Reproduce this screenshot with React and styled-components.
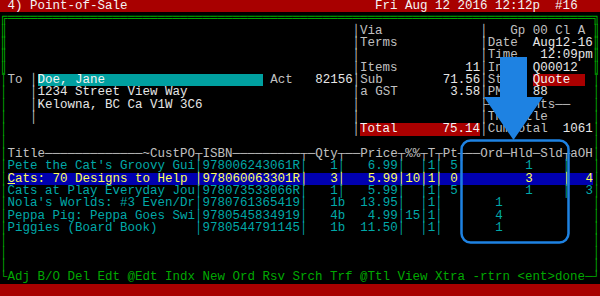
import React from 'react';
import styled, { createGlobalStyle } from 'styled-components';

const COLS = 80;

const TONES = {
  plain: { fg: '#c0c0c0', bg: 'transparent' },
  lab: { fg: '#c0c0c0', bg: 'transparent' },
  val: { fg: '#e6e6e6', bg: 'transparent' },
  grn: { fg: '#00a800', bg: 'transparent' },
  teal: { fg: '#00a8a8', bg: 'transparent' },
  bar: { fg: '#f4f4f4', bg: '#a80000' },
  red: { fg: '#f4f4f4', bg: '#aa0000' },
  name: { fg: '#f4f4f4', bg: '#00a0a0' },
  sel: { fg: '#ffff55', bg: '#0000b0' },
  cur: { fg: '#ffff55', bg: '#0000b0', underline: true },
};

const ITEMS = [
  { title: "Pete the Cat's Groovy Gui", isbn: '978006243061R', qty: '1', price: '6.99', disc: '', t: '1', pt: '5', ord: '', hld: '1', aoh: '' },
  { title: 'Cats: 70 Designs to Help', isbn: '978060063301R', qty: '3', price: '5.99', disc: '10', t: '1', pt: '0', ord: '', hld: '3', aoh: '4', selected: true },
  { title: 'Cats at Play Everyday Jou', isbn: '978073533066R', qty: '1', price: '5.99', disc: '', t: '1', pt: '5', ord: '', hld: '1', aoh: '3' },
  { title: "Nola's Worlds: #3 Even/Dr", isbn: '9780761365419', qty: '1b', price: '13.95', disc: '', t: '1', pt: '', ord: '1', hld: '', aoh: '' },
  { title: 'Peppa Pig: Peppa Goes Swi', isbn: '9780545834919', qty: '4b', price: '4.99', disc: '15', t: '1', pt: '', ord: '4', hld: '', aoh: '' },
  { title: 'Piggies (Board Book)', isbn: '9780544791145', qty: '1b', price: '11.50', disc: '', t: '1', pt: '', ord: '1', hld: '', aoh: '' },
];

const COMMANDS = 'Adj B/O Del Edt @Edt Indx New Ord Rsv Srch Trf @Ttl View Xtra -rtrn <ent>done';

// right-aligned text ending at column `end`
const ra = (end, text, tone) => [end - text.length + 1, text, tone];

const build = (parts, fill = 'plain') => {
  const out = [];
  let col = 0;
  [...parts]
    .filter((p) => p[1])
    .sort((a, b) => a[0] - b[0])
    .forEach(([c, text, tone]) => {
      if (c > col) out.push([' '.repeat(c - col), fill]);
      out.push([text, tone]);
      col = c + text.length;
    });
  if (col < COLS) out.push([' '.repeat(COLS - col), fill]);
  return out;
};

const sides = (row) => {
  const ch = row <= 5 ? '║' : '│';
  return [
    [0, ch, 'grn'],
    [79, ch, 'grn'],
  ];
};

const itemRow = (it) => {
  const tone = it.selected ? 'sel' : 'teal';
  const parts = [
    [26, '│', tone],
    [27, it.isbn, tone],
    [40, '│', tone],
    ra(52, it.price, tone),
    [53, '│', tone],
    [56, '│', tone],
    [57, it.t, tone],
    [58, '│', tone],
    [60, it.pt, tone],
  ];
  if (it.selected) {
    parts.push([1, it.title[0], 'cur'], [2, it.title.slice(1), tone]);
  } else {
    parts.push([1, it.title, tone]);
  }
  if (it.qty.endsWith('b')) parts.push([44, it.qty, tone]);
  else parts.push(ra(44, it.qty, tone), [45, '│', tone]);
  if (it.disc) parts.push(ra(55, it.disc, tone));
  if (it.ord) parts.push(ra(66, it.ord, tone));
  if (it.hld) parts.push(ra(70, it.hld, tone), [75, '│', tone]);
  if (it.aoh) parts.push(ra(78, it.aoh, tone));
  return parts;
};

const makeRows = () => {
  const rows = [];
  rows[0] = build(
    [
      [1, '4) Point-of-Sale', 'bar'],
      [50, 'Fri Aug 12 2016 12:12p  #16', 'bar'],
    ],
    'bar'
  );
  rows[1] = build([[0, '╔' + '═'.repeat(78) + '╗', 'grn']]);
  rows[2] = build([...sides(2), [47, '│', 'lab'], [48, 'Via', 'lab'], [64, '│', 'lab'], [68, 'Gp 00 Cl A', 'lab']]);
  rows[3] = build([...sides(3), [47, '│', 'lab'], [48, 'Terms', 'lab'], [64, '│', 'lab'], [65, 'Date', 'lab'], [71, 'Aug12-16', 'val']]);
  rows[4] = build([...sides(4), [47, '│', 'lab'], [64, '│', 'lab'], [65, 'Time', 'lab'], [72, '12:09pm', 'val']]);
  rows[5] = build([...sides(5), [47, '│', 'lab'], [48, 'Items', 'lab'], ra(63, '11', 'val'), [64, '│', 'lab'], [65, 'Inv', 'lab'], [71, 'Q00012', 'val']]);
  rows[6] = build([
    ...sides(6),
    [1, 'To', 'lab'],
    [4, '│', 'lab'],
    [5, 'Doe, Jane'.padEnd(30), 'name'],
    [36, 'Act', 'lab'],
    ra(46, '82156', 'val'),
    [47, '│', 'lab'],
    [48, 'Sub', 'lab'],
    ra(63, '71.56', 'val'),
    [64, '│', 'lab'],
    [65, 'Stat', 'lab'],
    [71, 'Quote  ', 'red'],
  ]);
  rows[7] = build([
    ...sides(7),
    [4, '│', 'lab'],
    [5, '1234 Street View Way', 'val'],
    [47, '│', 'lab'],
    [48, 'a GST', 'lab'],
    ra(63, '3.58', 'val'),
    [64, '│', 'lab'],
    [65, 'PM', 'lab'],
    [71, '88', 'val'],
  ]);
  rows[8] = build([
    ...sides(8),
    [4, '│', 'lab'],
    [5, 'Kelowna, BC Ca V1W 3C6', 'val'],
    [47, '│', 'lab'],
    [64, '├───Points──', 'lab'],
  ]);
  rows[9] = build([...sides(9), [4, '│', 'lab'], [47, '│', 'lab'], [64, '│', 'lab'], [65, 'TheTitle', 'lab']]);
  rows[10] = build([
    ...sides(10),
    [47, '│', 'lab'],
    [48, 'Total' + ' '.repeat(6) + '75.14', 'red'],
    [64, '│', 'lab'],
    [65, 'CumTotal', 'lab'],
    [75, '1061', 'val'],
  ]);
  rows[11] = build(sides(11));
  rows[12] = build([
    ...sides(12),
    [1, 'Title', 'lab'],
    [6, '─'.repeat(13), 'lab'],
    [19, '~CustPO', 'lab'],
    [26, '┬', 'lab'],
    [27, 'ISBN', 'lab'],
    [31, '─'.repeat(9), 'lab'],
    [40, '┬─Qty┬──Price┬%%┬T┬Pt┬──Ord─Hld─Sld┬aOH', 'lab'],
  ]);
  ITEMS.forEach((it, i) => {
    const r = 13 + i;
    rows[r] = build([...sides(r), ...itemRow(it)], it.selected ? 'sel' : 'plain');
  });
  for (let r = 19; r <= 21; r++) rows[r] = build(sides(r));
  rows[22] = build([
    [0, '└', 'grn'],
    [1, COMMANDS, 'grn'],
    [78, '─┘', 'grn'],
  ]);
  rows[23] = build([], 'bar');
  return rows;
};

const GlobalStyle = createGlobalStyle`
  html, body {
    margin: 0;
    padding: 0;
    background: #000;
  }
`;

const Screen = styled.div`
  position: relative;
  width: 600px;
  height: 296px;
  overflow: hidden;
  display: grid;
  grid-template-rows: repeat(24, 1fr);
  background: #000;
  font-family: 'Liberation Mono', 'DejaVu Sans Mono', monospace;
  font-size: 12.5px;
`;

const Line = styled.div`
  display: flex;
  align-items: stretch;
  white-space: pre;
  line-height: 12.33px;
  min-height: 0;
`;

const Seg = styled.span`
  display: block;
  color: ${(p) => TONES[p.$tone].fg};
  background: ${(p) => TONES[p.$tone].bg};
  text-decoration: ${(p) => (TONES[p.$tone].underline ? 'underline' : 'none')};
  text-underline-offset: 1px;
`;

const Overlay = styled.svg`
  position: absolute;
  top: 0;
  left: 0;
  width: 600px;
  height: 296px;
  pointer-events: none;
`;

const Callout = () => (
  <Overlay viewBox="0 0 600 296">
    <path d="M500 57 H527 V97 H543 L513.5 140 L484 97 H500 Z" fill="#1e82e2" />
    <rect x="461.5" y="140.5" width="107" height="102" rx="9" fill="none" stroke="#1e82e2" strokeWidth="2.5" />
  </Overlay>
);

const App = () => {
  const rows = makeRows();
  return (
    <>
      <GlobalStyle />
      <Screen>
        {rows.map((segs, r) => (
          <Line key={r}>
            {segs.map(([text, tone], i) => (
              <Seg key={i} $tone={tone}>
                {text}
              </Seg>
            ))}
          </Line>
        ))}
        <Callout />
      </Screen>
    </>
  );
};

export default App;
